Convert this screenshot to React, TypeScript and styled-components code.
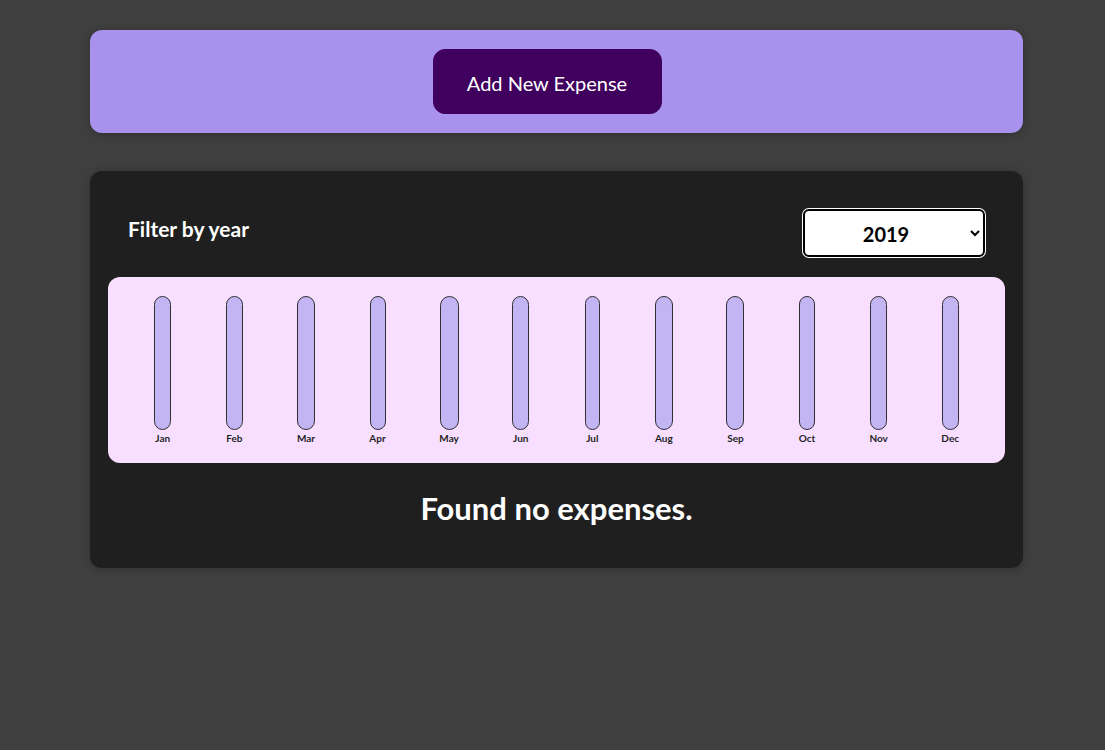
import React from "react";
import styled, { createGlobalStyle } from "styled-components";

const Global = createGlobalStyle`
  html, body { margin: 0; padding: 0; background: #3f3f3f; }
  body { font-family: Lato, "Noto Sans", sans-serif; }
  * { box-sizing: border-box; }
`;

const Page = styled.div`
  min-height: 750px;
  padding: 30px 0 0 8px;
  display: flex;
  flex-direction: column;
  align-items: center;
`;

const NewExpenseCard = styled.div`
  width: 933px;
  background: #a892ee;
  border-radius: 12px;
  padding: 19px;
  display: flex;
  justify-content: center;
  box-shadow: 0 1px 8px rgba(0, 0, 0, 0.25);
`;

const AddButton = styled.button`
  font-family: Lato, "Noto Sans", sans-serif;
  font-size: 20px;
  color: #fff;
  background: #40005d;
  border: 1px solid #40005d;
  border-radius: 12px;
  height: 65px;
  width: 229px;
  margin-right: 19px;
  padding: 2px 0 0;
  cursor: pointer;
`;

const ExpensesCard = styled.div`
  width: 933px;
  margin-top: 38px;
  background: #1f1f1f;
  border-radius: 12px;
  padding: 19px 18px;
  box-shadow: 0 1px 8px rgba(0, 0, 0, 0.25);
`;

const FilterRow = styled.div`
  display: flex;
  align-items: center;
  justify-content: space-between;
  margin-top: 19px;
  padding: 0 20px;
`;

const FilterLabel = styled.label`
  color: #fff;
  font-weight: 700;
  font-size: 21px;
  margin-top: -9px;
`;

const YearSelect = styled.select`
  width: 182px;
  height: 48px;
  font-family: Lato, "Noto Sans", sans-serif;
  font-weight: 700;
  font-size: 20px;
  text-align: center;
  text-align-last: center;
  background: #fff;
  color: #000;
  border: 2px solid #000;
  border-radius: 6px;
  box-shadow: 0 0 0 1px #fff;
  padding: 2px 4px 0 0;
`;

const Chart = styled.div`
  margin-top: 20px;
  height: 186px;
  padding: 19px;
  border-radius: 12px;
  background: #f8dfff;
  display: grid;
  grid-template-columns: repeat(12, 1fr);
  justify-items: center;
`;

const BarColumn = styled.div`
  height: 100%;
  display: flex;
  flex-direction: column;
  align-items: center;
`;

const BarInner = styled.div<{ $w: number }>`
  flex: 1;
  width: ${(p) => p.$w}px;
  border: 1px solid #313131;
  border-radius: 12px;
  background: #c3b4f3;
`;

const BarLabel = styled.div`
  height: 14px;
  line-height: 17px;
  font-size: 10px;
  font-weight: 700;
  color: #1f1f1f;
`;

const Fallback = styled.h2`
  margin: 27px 0 23px;
  line-height: 36px;
  font-size: 31px;
  font-weight: 700;
  text-align: center;
  color: #fff;
`;

const months: [string, number][] = [
  ["Jan", 17],
  ["Feb", 17],
  ["Mar", 18],
  ["Apr", 16],
  ["May", 19],
  ["Jun", 17],
  ["Jul", 15],
  ["Aug", 18],
  ["Sep", 18],
  ["Oct", 16],
  ["Nov", 17],
  ["Dec", 17],
];

export default function App() {
  return (
    <>
      <Global />
      <Page>
        <NewExpenseCard>
          <AddButton>Add New Expense</AddButton>
        </NewExpenseCard>
        <ExpensesCard>
          <FilterRow>
            <FilterLabel>Filter by year</FilterLabel>
            <YearSelect defaultValue="2019">
              <option value="2022">2022</option>
              <option value="2021">2021</option>
              <option value="2020">2020</option>
              <option value="2019">2019</option>
            </YearSelect>
          </FilterRow>
          <Chart>
            {months.map(([m, w]) => (
              <BarColumn key={m}>
                <BarInner $w={w} />
                <BarLabel>{m}</BarLabel>
              </BarColumn>
            ))}
          </Chart>
          <Fallback>Found no expenses.</Fallback>
        </ExpensesCard>
      </Page>
    </>
  );
}
